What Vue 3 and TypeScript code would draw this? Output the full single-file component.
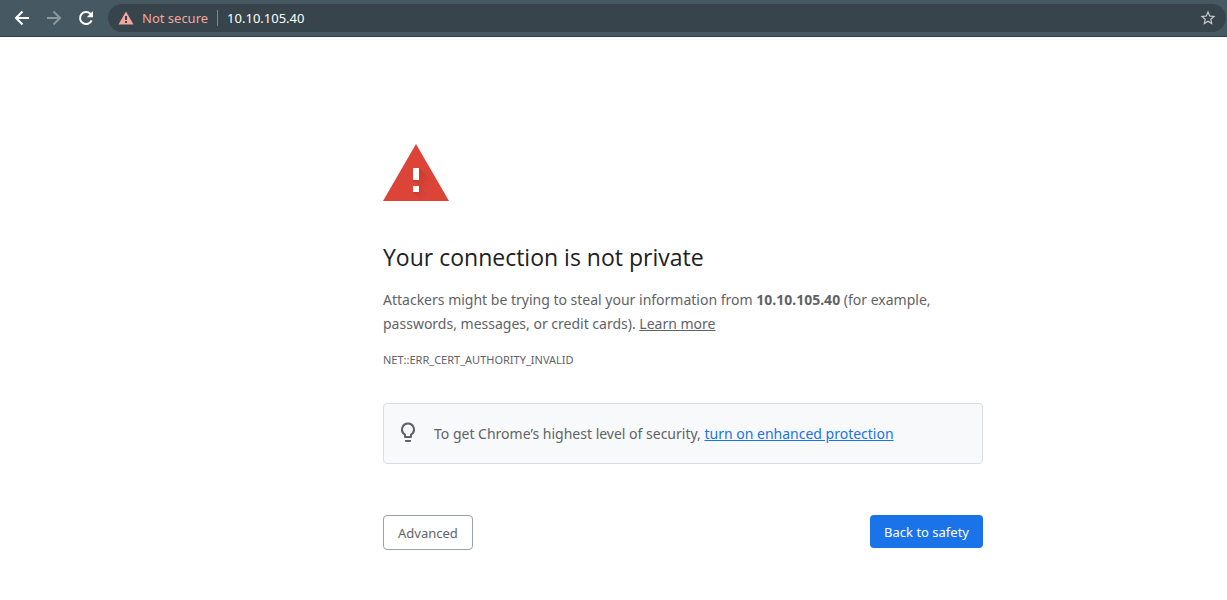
<script setup lang="ts">
import { ref } from 'vue'

const host = '10.10.105.40'
const address = ref(host)
</script>

<template>
  <div class="browser">
    <header class="toolbar">
      <nav class="nav" aria-label="Navigation">
        <button type="button" class="tool" aria-label="Back">
          <svg viewBox="0 0 20 20" width="20" height="20"><path d="M17 10H4.5M10.5 3.5 4 10l6.500 6.500" /></svg>
        </button>
        <button type="button" class="tool dim" aria-label="Forward" disabled>
          <svg viewBox="0 0 20 20" width="20" height="20"><path d="M3 10h12.500M9.500 3.500 16 10l-6.500 6.500" /></svg>
        </button>
        <button type="button" class="tool" aria-label="Reload">
          <svg viewBox="0 0 20 20" width="20" height="20">
            <path d="M15.600 12.300A6 6 0 1 1 14.300 5.800L16 7.500" />
            <path class="solid" d="M17 3v6.200h-6.200z" />
          </svg>
        </button>
      </nav>
      <div class="omnibox">
        <button type="button" class="security">
          <svg viewBox="0 0 16 14" width="16" height="14" aria-hidden="true">
            <path fill="#f6a59c" d="M8 .5 15.500 13.500H.5z" />
            <path fill="#37444b" d="M7 5h2v4H7zM7 10h2v2H7z" />
          </svg>
          <span>Not secure</span>
        </button>
        <input v-model="address" class="address" type="text" aria-label="Address" spellcheck="false" />
        <button type="button" class="star" aria-label="Bookmark this page">
          <svg viewBox="0 0 24 24" width="18" height="18"><path fill="#c6cacc" d="m22 9.240-7.190-.62L12 2 9.190 8.630 2 9.240l5.460 4.730L5.820 21 12 17.270 18.180 21l-1.630-7.030L22 9.240zM12 15.400l-3.760 2.270 1-4.280-3.320-2.880 4.380-.38L12 6.100l1.710 4.040 4.380.38-3.320 2.880 1 4.280L12 15.400z" /></svg>
        </button>
      </div>
    </header>

    <main class="page">
      <section class="warning">
        <svg class="alert" viewBox="0 0 66 57" width="66" height="57" aria-hidden="true">
          <defs>
            <linearGradient id="shade" x1="32" y1="26" x2="47" y2="41" gradientUnits="userSpaceOnUse">
              <stop offset="0" stop-color="#c43b2f" />
              <stop offset="1" stop-color="#db4437" />
            </linearGradient>
            <linearGradient id="shade-dot" x1="32" y1="43" x2="42" y2="53" gradientUnits="userSpaceOnUse">
              <stop offset="0" stop-color="#c43b2f" />
              <stop offset="1" stop-color="#db4437" />
            </linearGradient>
          </defs>
          <path fill="#db4437" d="M33 0 66 57H0z" />
          <path fill="url(#shade)" d="M36 24 50.500 38 61 57H51L30 36z" />
          <path fill="url(#shade-dot)" d="M36 42 51 57H39l-9-9z" />
          <path fill="#fff" d="M30 24h6v12h-6zM30 42h6v6h-6z" />
        </svg>
        <h1>Your connection is not private</h1>
        <p class="detail">
          Attackers might be trying to steal your information from <strong>{{ host }}</strong> (for example,
          passwords, messages, or credit cards). <a href="#learn">Learn more</a>
        </p>
        <p class="code">NET::ERR_CERT_AUTHORITY_INVALID</p>
        <div class="tip">
          <svg viewBox="0 0 24 24" width="24" height="24" aria-hidden="true">
            <path fill="#5f6368" d="M12 2.500a7 7 0 0 0-4 12.740V17a1 1 0 0 0 1 1h6a1 1 0 0 0 1-1v-1.760A7 7 0 0 0 12 2.500zm2.850 11.100-.85.600V16h-4v-1.800l-.85-.6a5 5 0 1 1 5.700 0zM9 20h6v1a1 1 0 0 1-1 1h-4a1 1 0 0 1-1-1z" />
          </svg>
          <p>To get Chrome’s highest level of security, <a href="#protection">turn on enhanced protection</a></p>
        </div>
        <div class="actions">
          <button type="button" class="advanced">Advanced</button>
          <button type="button" class="safety">Back to safety</button>
        </div>
      </section>
    </main>
  </div>
</template>

<style>
body {
  margin: 0;
  background: #fff;
}
</style>

<style scoped>
.browser {
  font-family: "Segoe UI", "Noto Sans", "Open Sans", sans-serif;
  color: #5f6368;
}
button,
input {
  font: inherit;
  margin: 0;
  padding: 0;
  border: 0;
  background: none;
}
button {
  cursor: pointer;
}
svg {
  display: block;
  flex: none;
}
.toolbar {
  display: flex;
  align-items: center;
  gap: 12px;
  box-sizing: border-box;
  height: 37px;
  padding: 0 1px 1px 12px;
  background: #465962;
  border-bottom: 1px solid #303e45;
}
.nav {
  display: flex;
  gap: 12px;
}
.tool path {
  fill: none;
  stroke: #fff;
  stroke-width: 2;
}
.tool .solid {
  fill: #fff;
  stroke: none;
}
.dim path {
  stroke: #8c989d;
}
.omnibox {
  display: flex;
  flex: 1;
  align-items: center;
  min-width: 0;
  height: 28px;
  padding: 0 9px 0 10px;
  box-sizing: border-box;
  border-radius: 14px;
  background: #37444b;
  font-size: 13px;
}
.security {
  display: flex;
  align-items: center;
  gap: 8px;
  height: 16px;
  padding-right: 9px;
  border-right: 1px solid #7d888d;
  color: #f6a59c;
  white-space: nowrap;
}
.address {
  flex: 1;
  min-width: 0;
  padding-left: 9px;
  color: #fff;
  outline: none;
}
.page {
  display: grid;
  grid-template-columns: 383fr minmax(0, 600px) 244fr;
  padding: 107px 0 50px;
}
.warning {
  grid-column: 2;
}
h1 {
  margin: 40px 0 15px;
  color: #202124;
  font-family: "Segoe UI", "Open Sans", "Noto Sans", sans-serif;
  font-size: 23px;
  font-weight: 400;
  line-height: 32px;
}
p {
  margin: 0;
  font-size: 14px;
  line-height: 24px;
}
.detail a {
  color: inherit;
}
.code {
  margin-top: 12px;
  font-size: 11px;
}
.tip {
  display: flex;
  align-items: flex-start;
  gap: 14px;
  margin-top: 31px;
  padding: 16px 12px 17px;
  border: 1px solid #dadce0;
  border-radius: 4px;
  background: #f8f9fa;
}
.tip p {
  padding-top: 2px;
}
.tip a {
  color: #1a73e8;
}
.actions {
  display: flex;
  align-items: flex-start;
  justify-content: space-between;
  margin-top: 51px;
}
.actions button {
  padding: 9px 14px 7px;
  border-radius: 4px;
  font-size: 13px;
  line-height: 17px;
}
.actions .advanced {
  border: 1px solid #9aa0a6;
  color: #5f6368;
}
.actions .safety {
  background: #1a73e8;
  color: #fff;
}
</style>
